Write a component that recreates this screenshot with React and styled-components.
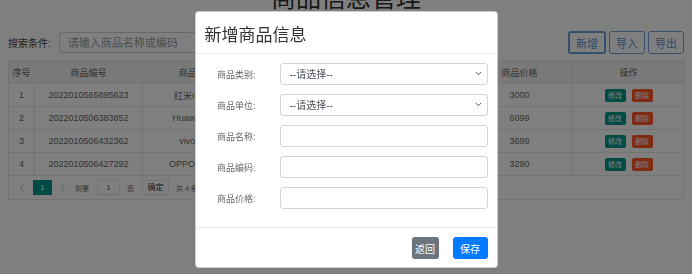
import React from 'react'
import styled, { createGlobalStyle } from 'styled-components'

const GlobalStyle = createGlobalStyle`
html, body {
  margin: 0;
  padding: 0;
  background: #fff;
  overflow: hidden;
}
body {
  font-family: "Liberation Sans", "Noto Sans CJK SC", sans-serif;
}
`

const Page = styled.div`
padding: 0 8px;
height: 274px;
box-sizing: border-box;
`

const Title = styled.h1`
margin: -17px 0 0;
height: 30px;
line-height: 30px;
font-size: 25px;
font-weight: 400;
text-align: center;
color: #333;
`

const Toolbar = styled.div`
display: flex;
align-items: center;
height: 23px;
margin-top: 18px;
`

const SearchLabel = styled.span`
font-size: 10px;
color: #444;
`

const SearchInput = styled.input`
margin-left: 8px;
width: 320px;
height: 21px;
box-sizing: border-box;
border: 1px solid #d2d2d2;
border-radius: 3px;
padding: 0 8px;
font-size: 11px;
font-family: inherit;
&::placeholder { color: #999; }
`

const ButtonGroup = styled.div`
margin-left: auto;
display: flex;
gap: 3px;
`

const OutlineButton = styled.button`
height: 23px;
padding: 0 6px;
box-sizing: border-box;
border: ${p => (p.$focused ? 2 : 1)}px solid #6aa0dc;
border-radius: 3px;
background: #fff;
color: #5a8fcc;
font-size: 11px;
font-family: inherit;
`

const TableWrap = styled.div`
margin-top: 6px;
`

const Table = styled.table`
width: 100%;
border-collapse: collapse;
table-layout: fixed;
th, td {
  border: 1px solid #e6e6e6;
  height: 22px;
  padding: 0;
  font-size: 9px;
  color: #666;
  text-align: center;
  font-weight: 400;
  white-space: nowrap;
  overflow: hidden;
}
th {
  background: #f2f2f2;
}
`

const OpButton = styled.span`
display: inline-block;
width: 21px;
height: 13px;
line-height: 13px;
margin: 0 3px;
border-radius: 2px;
font-size: 7px;
color: #fff;
background: ${p => (p.$danger ? '#ff5722' : '#009688')};
vertical-align: middle;
`

const Pager = styled.div`
display: flex;
align-items: center;
height: 23px;
border: 1px solid #e6e6e6;
border-top: none;
padding-left: 8px;
font-size: 7px;
color: #666;
`

const PagerArrow = styled.svg`
width: 10px;
height: 10px;
margin: ${p => (p.$next ? '0 0 0 6px' : '0 6px 0 0')};
`

const PageCurrent = styled.span`
width: 19px;
height: 15px;
line-height: 15px;
text-align: center;
background: #009688;
color: #fff;
font-size: 8px;
`

const PagerText = styled.span`
margin-left: ${p => p.$gap}px;
`

const PagerBox = styled.span`
margin-left: ${p => p.$gap}px;
width: ${p => p.$w}px;
height: 15px;
line-height: 13px;
box-sizing: border-box;
border: 1px solid #e6e6e6;
text-align: center;
font-size: 8px;
color: ${p => (p.$strong ? '#333' : '#666')};
`

const Backdrop = styled.div`
position: fixed;
inset: 0;
background: rgba(0, 0, 0, 0.5);
display: flex;
justify-content: center;
align-items: flex-start;
padding-top: 11px;
`

const Modal = styled.div`
width: 303px;
box-sizing: border-box;
background: #fff;
border: 1px solid rgba(0, 0, 0, 0.2);
border-radius: 4px;
`

const ModalHeader = styled.div`
height: 42px;
box-sizing: border-box;
display: flex;
align-items: center;
padding: 1px 9px 0;
border-bottom: 1px solid #e9ecef;
`

const ModalTitle = styled.h5`
margin: 0;
font-size: 17px;
font-weight: 400;
color: #333;
`

const ModalBody = styled.div`
display: grid;
grid-template-columns: 53px 1fr;
column-gap: 22px;
row-gap: 9px;
align-items: center;
padding: 9px 9px 18px;
`

const FieldLabel = styled.label`
font-size: 9px;
color: #666;
text-align: right;
padding-right: 2px;
white-space: nowrap;
`

const SelectWrap = styled.div`
position: relative;
`

const Select = styled.select`
width: 100%;
height: 22px;
box-sizing: border-box;
appearance: none;
border: 1px solid #ced4da;
border-radius: 3px;
background: #fff;
padding: 0 9px;
font-size: 10px;
font-family: inherit;
color: #495057;
`

const Chevron = styled.svg`
position: absolute;
right: 6px;
top: 8px;
pointer-events: none;
`

const TextInput = styled.input`
width: 100%;
height: 22px;
box-sizing: border-box;
border: 1px solid #ced4da;
border-radius: 3px;
padding: 0 9px;
font-size: 10px;
`

const ModalFooter = styled.div`
display: flex;
justify-content: flex-end;
gap: 14px;
padding: 9px 9px 8px;
border-top: 1px solid #e9ecef;
`

const SolidButton = styled.button`
width: ${p => p.$w}px;
height: 22px;
padding: 0;
border: none;
border-radius: 3px;
font-size: 10px;
font-family: inherit;
color: #fff;
background: ${p => (p.$primary ? '#007bff' : '#6c757d')};
`

const rows = [
  ['1', '2022010565895623', '红米note11', '手机', '台', '3000'],
  ['2', '2022010506383852', 'Huawei P50', '手机', '台', '6099'],
  ['3', '2022010506432362', 'vivo S12', '手机', '台', '3699'],
  ['4', '2022010506427292', 'OPPO Reno7', '手机', '台', '3290'],
]

const fields = ['商品名称', '商品编码', '商品价格']

const ChevronIcon = () => (
  <Chevron width="7" height="5" viewBox="0 0 7 5">
    <path d="M0.8 1 L3.5 3.7 L6.2 1" fill="none" stroke="#555" strokeWidth="1" />
  </Chevron>
)

const Arrow = ({ next }) => (
  <PagerArrow $next={next} viewBox="0 0 10 10">
    <path
      d={next ? 'M3.5 1.5 L6.5 5 L3.5 8.5' : 'M6.5 1.5 L3.5 5 L6.5 8.5'}
      fill="none"
      stroke="#c2c2c2"
      strokeWidth="1"
    />
  </PagerArrow>
)

export default function App() {
  return (
    <>
      <GlobalStyle />
      <Page>
        <Title>商品信息管理</Title>
        <Toolbar>
          <SearchLabel>搜索条件:</SearchLabel>
          <SearchInput placeholder="请输入商品名称或编码" />
          <ButtonGroup>
            <OutlineButton $focused>新增</OutlineButton>
            <OutlineButton>导入</OutlineButton>
            <OutlineButton>导出</OutlineButton>
          </ButtonGroup>
        </Toolbar>
        <TableWrap>
          <Table>
            <colgroup>
              <col style={{ width: 26 }} />
              <col style={{ width: 108 }} />
              <col style={{ width: 108 }} />
              <col style={{ width: 108 }} />
              <col style={{ width: 108 }} />
              <col style={{ width: 106 }} />
              <col style={{ width: 112 }} />
            </colgroup>
            <thead>
              <tr>
                <th>序号</th>
                <th>商品编号</th>
                <th>商品名称</th>
                <th>商品类别</th>
                <th>商品单位</th>
                <th>商品价格</th>
                <th>操作</th>
              </tr>
            </thead>
            <tbody>
              {rows.map(r => (
                <tr key={r[0]}>
                  {r.map((c, i) => <td key={i}>{c}</td>)}
                  <td>
                    <OpButton>修改</OpButton>
                    <OpButton $danger>删除</OpButton>
                  </td>
                </tr>
              ))}
            </tbody>
          </Table>
          <Pager>
            <Arrow />
            <PageCurrent>1</PageCurrent>
            <Arrow next />
            <PagerText $gap={7}>到第</PagerText>
            <PagerBox $gap={8} $w={23}>1</PagerBox>
            <PagerText $gap={7}>页</PagerText>
            <PagerBox $gap={8} $w={27} $strong>确定</PagerBox>
            <PagerText $gap={7}>共 4 条</PagerText>
          </Pager>
        </TableWrap>
      </Page>
      <Backdrop>
        <Modal>
          <ModalHeader>
            <ModalTitle>新增商品信息</ModalTitle>
          </ModalHeader>
          <ModalBody>
            <FieldLabel>商品类别:</FieldLabel>
            <SelectWrap>
              <Select><option>--请选择--</option></Select>
              <ChevronIcon />
            </SelectWrap>
            <FieldLabel>商品单位:</FieldLabel>
            <SelectWrap>
              <Select><option>--请选择--</option></Select>
              <ChevronIcon />
            </SelectWrap>
            {fields.map(f => (
              <React.Fragment key={f}>
                <FieldLabel>{f}:</FieldLabel>
                <TextInput />
              </React.Fragment>
            ))}
          </ModalBody>
          <ModalFooter>
            <SolidButton $w={27}>返回</SolidButton>
            <SolidButton $w={35} $primary>保存</SolidButton>
          </ModalFooter>
        </Modal>
      </Backdrop>
    </>
  )
}
